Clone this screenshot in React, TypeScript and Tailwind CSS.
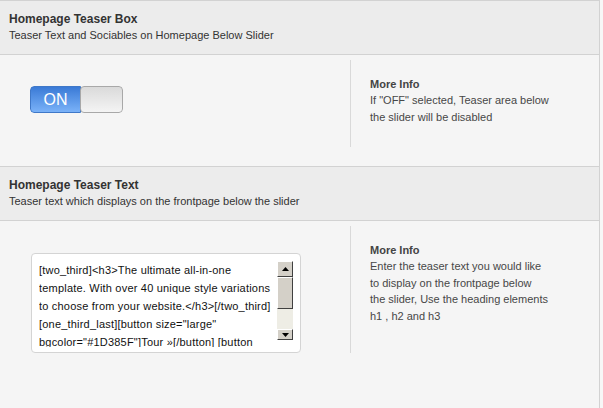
import React from 'react';

const TEASER_LINES = [
  '[two_third]<h3>The ultimate all-in-one',
  'template. With over 40 unique style variations',
  'to choose from your website.</h3>[/two_third]',
  '[one_third_last][button size="large"',
  'bgcolor="#1D385F"]Tour »[/button] [button',
  'size="large" bgcolor="#1D385F"]Buy now',
];

const SectionHeader: React.FC<{ title: string; subtitle: string }> = ({ title, subtitle }) => (
  <div className="bg-[#ececec] border-y border-[#d2d2d2] pl-[9px] pt-[10px] pb-[11px]">
    <div className="text-[12px] leading-[16px] font-bold text-[#333]">{title}</div>
    <div className="text-[11px] leading-[16px] text-[#333]">{subtitle}</div>
  </div>
);

const MoreInfo: React.FC<{ lines: string[] }> = ({ lines }) => (
  <div className="border-l border-[#d9d9d9] pl-[19px] pt-[16px] pb-[22px]">
    <div className="text-[11px] leading-[16px] font-bold text-[#444]">More Info</div>
    <div className="text-[11px] leading-[16.5px] text-[#474747] whitespace-nowrap">
      {lines.map(line => (
        <div key={line}>{line}</div>
      ))}
    </div>
  </div>
);

const Toggle = () => (
  <div className="flex w-[93px] h-[27px] rounded-[4px] overflow-hidden">
    <div className="w-[51px] flex items-center justify-center bg-gradient-to-b from-[#3a7ad6] to-[#7ab2f8] border border-[#3f78c8] rounded-l-[4px] text-white text-[16px] leading-none">
      ON
    </div>
    <div className="flex-1 bg-gradient-to-b from-[#dadada] to-[#f4f4f4] border border-[#a8a8a8] rounded-[4px] -ml-[1px]" />
  </div>
);

const ScrollButton: React.FC<{ up?: boolean; className?: string }> = ({ up, className }) => (
  <div
    className={`w-[16px] bg-[#d4d0c8] border border-t-white border-l-white border-r-[#404040] border-b-[#404040] flex items-center justify-center ${className ?? ''}`}
  >
    <svg width="7" height="4" viewBox="0 0 7 4">
      {up ? <polygon points="3.5,0 7,4 0,4" fill="#000" /> : <polygon points="0,0 7,0 3.5,4" fill="#000" />}
    </svg>
  </div>
);

export default function App() {
  return (
    <div className="min-h-[408px] bg-[#f7f7f7]" style={{ fontFamily: '"Liberation Sans", Arial, sans-serif' }}>
      <div className="w-[600px] min-h-[408px] bg-[#f5f5f5] border-r border-[#d2d2d2]">
        <SectionHeader title="Homepage Teaser Box" subtitle="Teaser Text and Sociables on Homepage Below Slider" />

        {/* Teaser on/off */}
        <div className="flex pt-[5px] pb-[19px]">
          <div className="w-[350px] pl-[30px] pt-[26px]">
            <Toggle />
          </div>
          <MoreInfo lines={['If "OFF" selected, Teaser area below', 'the slider will be disabled']} />
        </div>

        <SectionHeader title="Homepage Teaser Text" subtitle="Teaser text which displays on the frontpage below the slider" />

        {/* Teaser text */}
        <div className="flex pt-[5px] pb-[60px]">
          <div className="w-[350px] pl-[31px] pt-[27px]">
            <div className="w-[270px] h-[100px] bg-white border border-[#d4d4d4] rounded-[4px] flex pl-[7px] pt-[7px] pr-[7px]">
              <div className="flex-1 h-[86px] overflow-hidden text-[11px] leading-[18px] text-[#111] whitespace-nowrap tracking-[0.2px]">
                {TEASER_LINES.map(line => (
                  <div key={line}>{line}</div>
                ))}
              </div>
              <div className="w-[16px] h-[79px] flex flex-col bg-[#eeede5]">
                <ScrollButton up className="h-[16px]" />
                <div className="w-[16px] h-[32px] bg-[#d4d0c8] border border-t-white border-l-white border-r-[#404040] border-b-[#404040]" />
                <div className="flex-1" />
                <ScrollButton className="h-[11px] items-start pt-[3px]" />
              </div>
            </div>
          </div>
          <MoreInfo
            lines={[
              'Enter the teaser text you would like',
              'to display on the frontpage below',
              'the slider, Use the heading elements',
              'h1 , h2 and h3',
            ]}
          />
        </div>
      </div>
    </div>
  );
}
